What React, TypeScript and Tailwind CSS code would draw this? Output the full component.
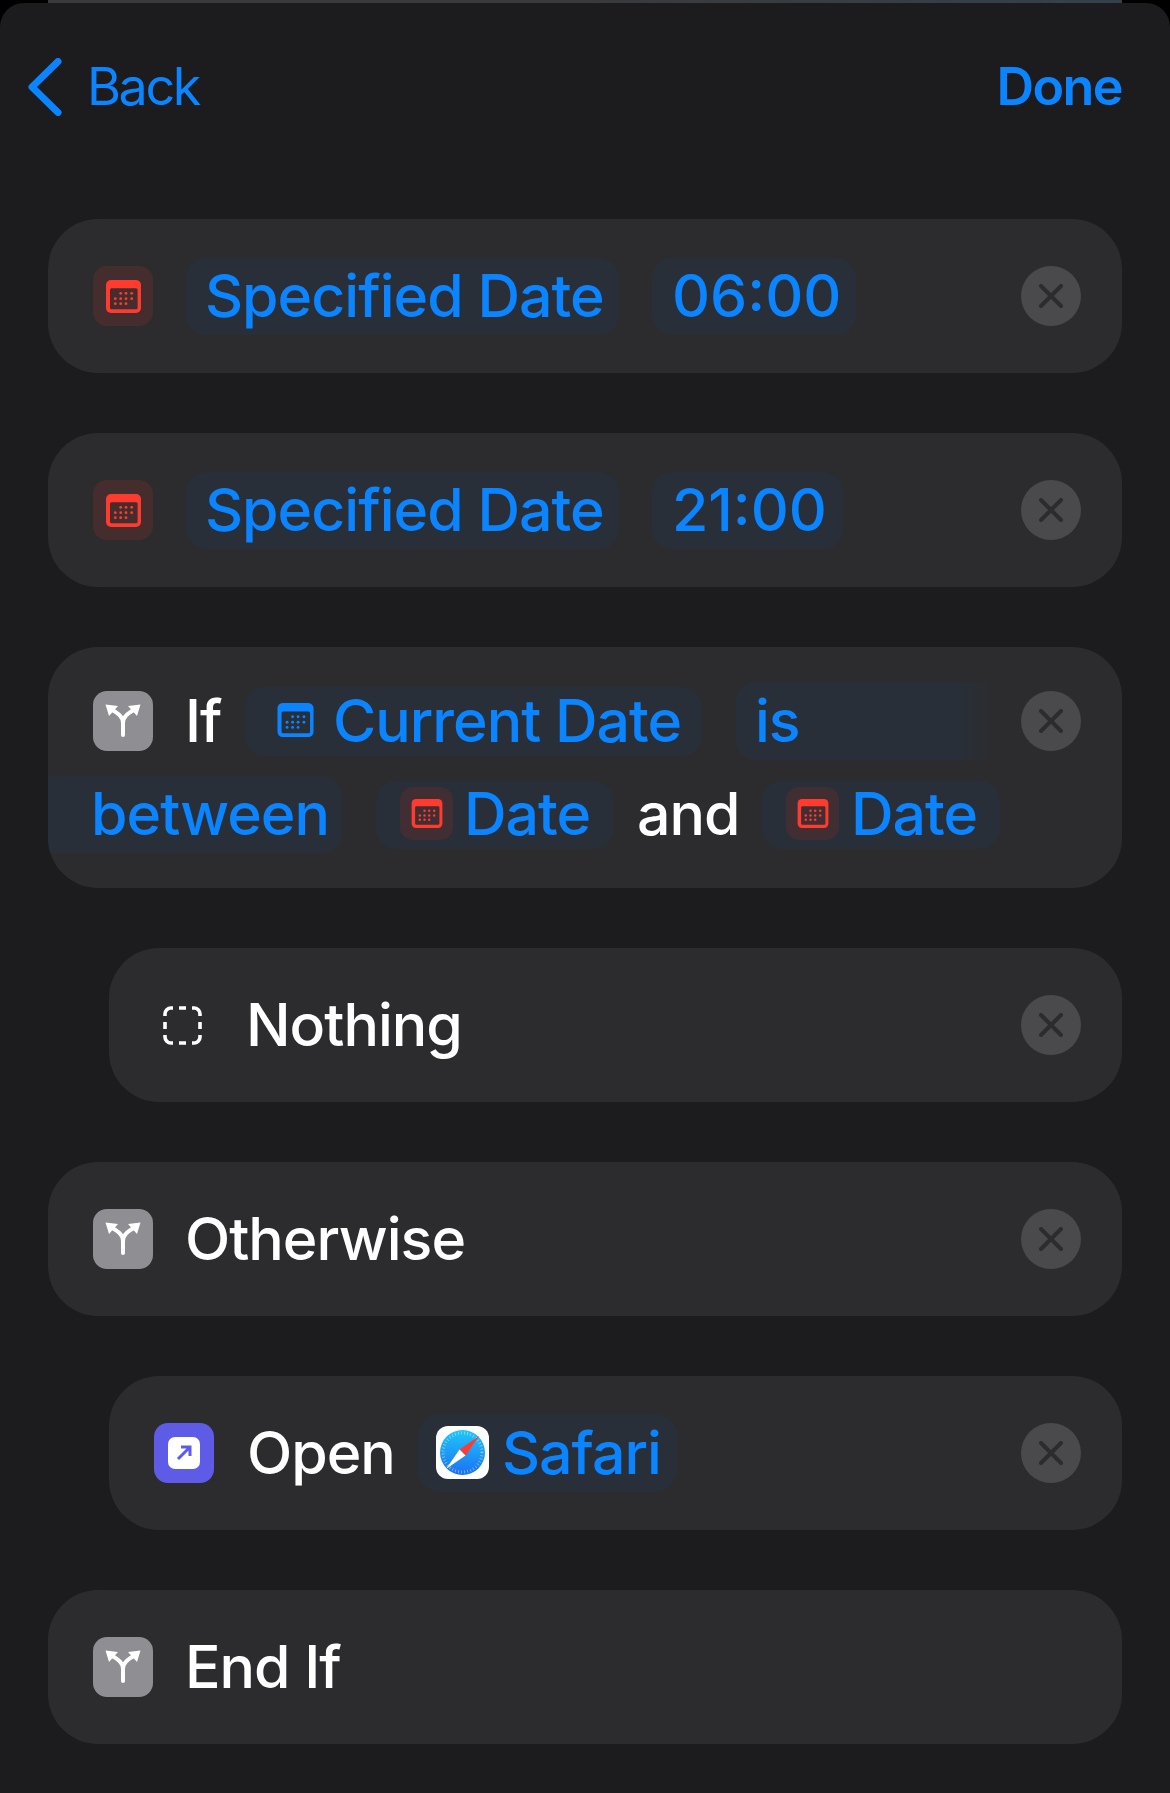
import React from 'react';

const CalendarIcon: React.FC<{ color: string; dark: string; className: string }> = ({ color, dark, className }) => {
  const dots = [
    [14.7, 13.3], [20, 13.3], [25.7, 13.3],
    [9.3, 18.7], [14.7, 18.7], [20, 18.7], [25.7, 18.7],
    [9.3, 23.7], [14.7, 23.7], [20, 23.7],
  ];
  return (
    <svg viewBox="0 0 35 33" className={className}>
      <rect width="35" height="33" rx="5" fill={color} />
      <rect x="4" y="8.3" width="27.6" height="21" rx="1.5" fill={dark} />
      {dots.map(([x, y]) => (
        <circle key={`${x}-${y}`} cx={x} cy={y} r="1.4" fill={color} />
      ))}
    </svg>
  );
};

const RedCalendarTile = () => (
  <div className="w-[60px] h-[60px] shrink-0 rounded-[14px] bg-[#452d2d] flex items-center justify-center">
    <CalendarIcon color="#ff3b30" dark="#452d2d" className="w-[35px] h-[33px]" />
  </div>
);

const SmallCalendarTile = () => (
  <div className="w-[53px] h-[53px] shrink-0 rounded-[13px] bg-[#412e32] flex items-center justify-center">
    <CalendarIcon color="#ff3b30" dark="#412e32" className="w-[32px] h-[29px]" />
  </div>
);

const BranchTile = () => (
  <div className="w-[60px] h-[60px] shrink-0 rounded-[14px] bg-[#8e8e93]">
    <svg viewBox="0 0 60 60" className="w-[60px] h-[60px]" fill="none">
      <path d="M30 44V32C30 26 26 23 18 18M30 32C30 26 34 23 42 18" stroke="#fff" strokeWidth="4" strokeLinecap="round" />
      <path d="M12.5 13.5L25 15L16 25Z M47.5 13.5L35 15L44 25Z" fill="#fff" />
    </svg>
  </div>
);

const CloseButton = () => (
  <div className="ml-auto w-[60px] h-[60px] shrink-0 rounded-full bg-[#4a4a4c] flex items-center justify-center">
    <svg viewBox="0 0 24 24" className="w-[24px] h-[24px]" fill="none" stroke="#2c2c2e" strokeWidth="4" strokeLinecap="round">
      <path d="M2 2L22 22M22 2L2 22" />
    </svg>
  </div>
);

const Chip: React.FC<{ children: React.ReactNode; className: string }> = ({ children, className }) => (
  <div className={`flex items-center bg-[#282f39] text-[#0a84ff] pb-[2px] ${className}`}>{children}</div>
);

const Card: React.FC<{ children: React.ReactNode; indent?: boolean }> = ({ children, indent }) => (
  <div className={`h-[154px] mr-[48px] rounded-[50px] bg-[#2c2c2e] flex items-center pl-[45px] pr-[41px] text-white ${indent ? 'ml-[109px]' : 'ml-[48px]'}`}>
    {children}
  </div>
);

const SafariIcon = () => (
  <svg viewBox="0 0 53 53" className="w-[53px] h-[53px] shrink-0">
    <defs>
      <linearGradient id="safariBlue" x1="0" y1="0" x2="0" y2="1">
        <stop offset="0" stopColor="#1ec8fa" />
        <stop offset="1" stopColor="#1d6ff2" />
      </linearGradient>
    </defs>
    <rect width="53" height="53" rx="12" fill="#fff" />
    <circle cx="26.5" cy="26.5" r="22.5" fill="url(#safariBlue)" />
    <circle cx="26.5" cy="26.5" r="19.5" fill="none" stroke="#ffffff" strokeOpacity="0.55" strokeWidth="3" strokeDasharray="0.7 2.4" />
    <path d="M43 10L23.5 23.5L29.5 29.5Z" fill="#ff3b30" />
    <path d="M10 43L23.5 23.5L29.5 29.5Z" fill="#ffffff" />
  </svg>
);

export default function App() {
  return (
    <div className="w-[1170px] h-[1793px] bg-black font-['Inter',sans-serif] overflow-hidden">
      <div className="h-[3px] mx-[48px] bg-gradient-to-r from-[#3a3a3c] via-[#3a3a3c] to-[#33414c]" />
      <div className="h-[1790px] rounded-t-[24px] bg-[#1c1c1e]">
        {/* Nav */}
        <div className="h-[168px] mb-[48px] flex items-center justify-between pl-[28px] pr-[48px] text-[#0a84ff] text-[52px] leading-none">
          <div className="flex items-center">
            <svg viewBox="0 0 34 58" className="w-[34px] h-[58px]" fill="none" stroke="#0a84ff" strokeWidth="7" strokeLinecap="round" strokeLinejoin="round">
              <path d="M30 3.5L4 29L30 54.5" />
            </svg>
            <span className="ml-[25px] tracking-[-2.4px]">Back</span>
          </div>
          <span className="font-semibold tracking-[-1.6px]">Done</span>
        </div>

        <div className="flex flex-col gap-[60px] text-[59px] font-[450] leading-none tracking-[-1px]">
          <Card>
            <RedCalendarTile />
            <Chip className="ml-[33px] h-[77px] w-[433px] pl-[19px] rounded-[20px]">Specified Date</Chip>
            <Chip className="ml-[33px] h-[77px] w-[204px] pl-[20px] rounded-[20px] tracking-normal">06:00</Chip>
            <CloseButton />
          </Card>

          <Card>
            <RedCalendarTile />
            <Chip className="ml-[33px] h-[77px] w-[433px] pl-[19px] rounded-[20px]">Specified Date</Chip>
            <Chip className="ml-[33px] h-[77px] w-[191px] pl-[20px] rounded-[20px] tracking-normal">21:00</Chip>
            <CloseButton />
          </Card>

          {/* If block wraps on two lines, the "is between" chip is split over them */}
          <div className="mx-[48px] h-[241px] rounded-[50px] bg-[#2c2c2e] pt-[35px] text-white overflow-hidden">
            <div className="h-[78px] flex items-center pl-[45px] pr-[41px]">
              <BranchTile />
              <span className="ml-[32px] w-[60px] pb-[2px]">If</span>
              <Chip className="h-[69px] w-[457px] pl-[32px] rounded-[20px]">
                <CalendarIcon color="#0a84ff" dark="#282f39" className="w-[37px] h-[34px] mr-[19px]" />
                Current Date
              </Chip>
              <div className="ml-[34px] h-[78px] w-[258px] pl-[19px] pb-[2px] flex items-center rounded-l-[20px] text-[#0a84ff] bg-gradient-to-r from-[#282f39] from-85% to-[#2c2c2e]">
                is
              </div>
              <CloseButton />
            </div>
            <div className="mt-[16px] h-[77px] flex items-center">
              <Chip className="h-[77px] w-[295px] pl-[43px] rounded-r-[20px]">between</Chip>
              <Chip className="ml-[33px] h-[68px] w-[238px] pl-[24px] rounded-[20px]">
                <SmallCalendarTile />
                <span className="ml-[11px]">Date</span>
              </Chip>
              <span className="ml-[23px] w-[125px] pb-[2px]">and</span>
              <Chip className="h-[68px] w-[238px] pl-[24px] rounded-[20px]">
                <SmallCalendarTile />
                <span className="ml-[12px]">Date</span>
              </Chip>
            </div>
          </div>

          <Card indent>
            <svg viewBox="0 0 39 39" className="w-[39px] h-[39px] ml-[9px] shrink-0" fill="none" stroke="#fff" strokeWidth="3.6">
              <path d="M2 10V8a6 6 0 0 1 6-6h2M16 2h7M29 2h2a6 6 0 0 1 6 6v2M37 16v7M37 29v2a6 6 0 0 1-6 6h-2M23 37h-7M10 37H8a6 6 0 0 1-6-6v-2M2 23v-7" />
            </svg>
            <span className="ml-[44px] pb-[2px]">Nothing</span>
            <CloseButton />
          </Card>

          <Card>
            <BranchTile />
            <span className="ml-[32px] pb-[2px]">Otherwise</span>
            <CloseButton />
          </Card>

          <Card indent>
            <div className="w-[60px] h-[60px] shrink-0 rounded-[14px] bg-[#5e5ce6] flex items-center justify-center">
              <div className="w-[32px] h-[32px] rounded-[7px] bg-white flex items-center justify-center">
                <svg viewBox="0 0 16 16" className="w-[16px] h-[16px]" fill="none" stroke="#5e5ce6" strokeWidth="3">
                  <path d="M2 14L13 3M5 2H14V11" />
                </svg>
              </div>
            </div>
            <span className="ml-[33px] w-[170px] pb-[2px]">Open</span>
            <Chip className="h-[78px] w-[261px] pl-[19px] rounded-[24px]">
              <SafariIcon />
              <span className="ml-[13px]">Safari</span>
            </Chip>
            <CloseButton />
          </Card>

          <Card>
            <BranchTile />
            <span className="ml-[32px] pb-[2px]">End If</span>
          </Card>
        </div>
      </div>
    </div>
  );
}
